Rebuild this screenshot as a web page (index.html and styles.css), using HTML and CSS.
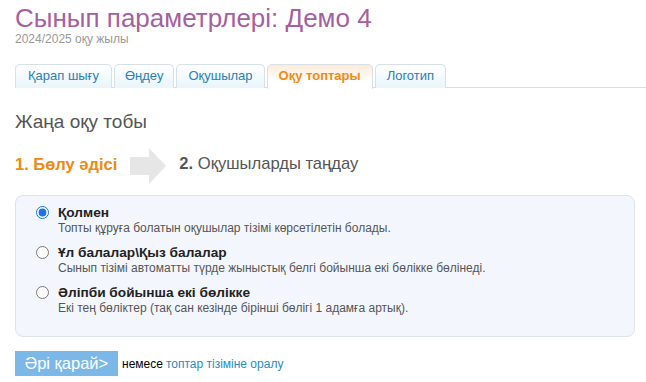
FILE: index.html
```html
<!DOCTYPE html>
<html lang="kk">
<head>
<meta charset="utf-8">
<title>Сынып параметрлері</title>
<link rel="stylesheet" href="styles.css">
</head>
<body>
<div class="page">
  <h1 class="title">Сынып параметрлері: Демо 4</h1>
  <div class="subtitle">2024/2025 оқу жылы</div>
  <ul class="tabs">
    <li class="tab">Қарап шығу</li>
    <li class="tab narrow">Өңдеу</li>
    <li class="tab mid">Оқушылар</li>
    <li class="tab active">Оқу топтары</li>
    <li class="tab mid">Логотип</li>
  </ul>
  <h2 class="heading">Жаңа оқу тобы</h2>
  <div class="steps">
    <span class="step current">1. Бөлу әдісі</span>
    <svg class="arrow" width="36" height="36" viewBox="0 0 36 36"><path d="M0 9H19V0L36 18L19 36V27H0Z" fill="#e6e6e6"/></svg>
    <span class="step next"><b>2.</b> Оқушыларды таңдау</span>
  </div>
  <div class="options">
    <label class="option">
      <input type="radio" name="m" checked>
      <span class="otext"><span class="oname">Қолмен</span><span class="odesc">Топты құруға болатын оқушылар тізімі көрсетілетін болады.</span></span>
    </label>
    <label class="option">
      <input type="radio" name="m">
      <span class="otext"><span class="oname">Ұл балалар\Қыз балалар</span><span class="odesc">Сынып тізімі автоматты түрде жыныстық белгі бойынша екі бөлікке бөлінеді.</span></span>
    </label>
    <label class="option">
      <input type="radio" name="m">
      <span class="otext"><span class="oname">Әліпби бойынша екі бөлікке</span><span class="odesc">Екі тең бөліктер (тақ сан кезінде бірінші бөлігі 1 адамға артық).</span></span>
    </label>
  </div>
  <div class="actions">
    <button class="btn">Әрі қарай&gt;</button>
    <span class="or">немесе</span>
    <a class="link" href="#">топтар тізіміне оралу</a>
  </div>
</div>
</body>
</html>
```
FILE: styles.css
```css
* { box-sizing: border-box; }
html, body { margin: 0; padding: 0; background: #fff; }
body { font-family: "Liberation Sans", Arial, sans-serif; }
.page { padding: 0 12px 0 15px; }
.title {
  margin: 0;
  padding-top: 4px;
  font-size: 26px;
  font-weight: normal;
  color: #a65f9f;
  line-height: 28px;
}
.subtitle {
  font-size: 12px;
  color: #999;
  line-height: 14px;
  margin-top: 0;
}
.tabs {
  list-style: none;
  margin: 18px -12px 0 0;
  padding: 0;
  display: flex;
  gap: 2px;
  border-bottom: 1px solid #d6e0e6;
  height: 24px;
}
.tab {
  height: 24px;
  padding: 0 12px;
  font-size: 13px;
  line-height: 22px;
  color: #2b7fb3;
  border: 1px solid #d6e0e6;
  border-bottom: none;
  border-radius: 5px 5px 0 0;
  background: linear-gradient(#ffffff, #e8f5fb);
}
.tab.narrow { padding: 0 10px; }
.tab.mid { padding: 0 11px; }
.tab.active {
  color: #f08a12;
  font-weight: bold;
  background: linear-gradient(#fdebd9, #ffffff 70%);
  height: 25px;
  margin-bottom: -1px;
  padding: 0 11px;
}
.heading {
  margin: 23px 0 0;
  font-size: 19px;
  font-weight: normal;
  color: #555;
  line-height: 22px;
}
.steps {
  display: flex;
  align-items: center;
  height: 36px;
  margin-top: 15px;
}
.step.current {
  color: #ee8a10;
  font-weight: bold;
  font-size: 16.5px;
  margin-top: -4px;
}
.arrow { margin: 0 13px 0 13px; }
.step.next {
  font-size: 16.6px;
  color: #555;
  margin-top: -4px;
}
.options {
  margin-top: 11px;
  width: 620px;
  background: #f3f7fd;
  border: 1px solid #dce3ea;
  border-radius: 8px;
  padding: 9px 0 20px 20px;
  display: flex;
  flex-direction: column;
  gap: 9px;
}
.option {
  display: flex;
  align-items: flex-start;
  gap: 9px;
}
.option input {
  margin: 1px 0 0 0;
  width: 13px;
  height: 13px;
  accent-color: #1a73e8;
}
.otext { display: flex; flex-direction: column; }
.oname {
  font-size: 13.7px;
  font-weight: bold;
  color: #222;
  line-height: 16px;
}
.odesc {
  font-size: 12px;
  color: #555;
  line-height: 15px;
}
.actions {
  display: flex;
  align-items: center;
  margin-top: 14px;
}
.btn {
  height: 25px;
  width: 103px;
  border: none;
  background: #7bb8e8;
  color: #fff;
  font-family: "Liberation Sans", Arial, sans-serif;
  font-size: 16.5px;
  padding: 0;
  margin-right: 4px;
}
.or { font-size: 12px; color: #000; margin-right: 3px; }
.link { font-size: 12px; color: #2a8ac4; text-decoration: none; }
```
